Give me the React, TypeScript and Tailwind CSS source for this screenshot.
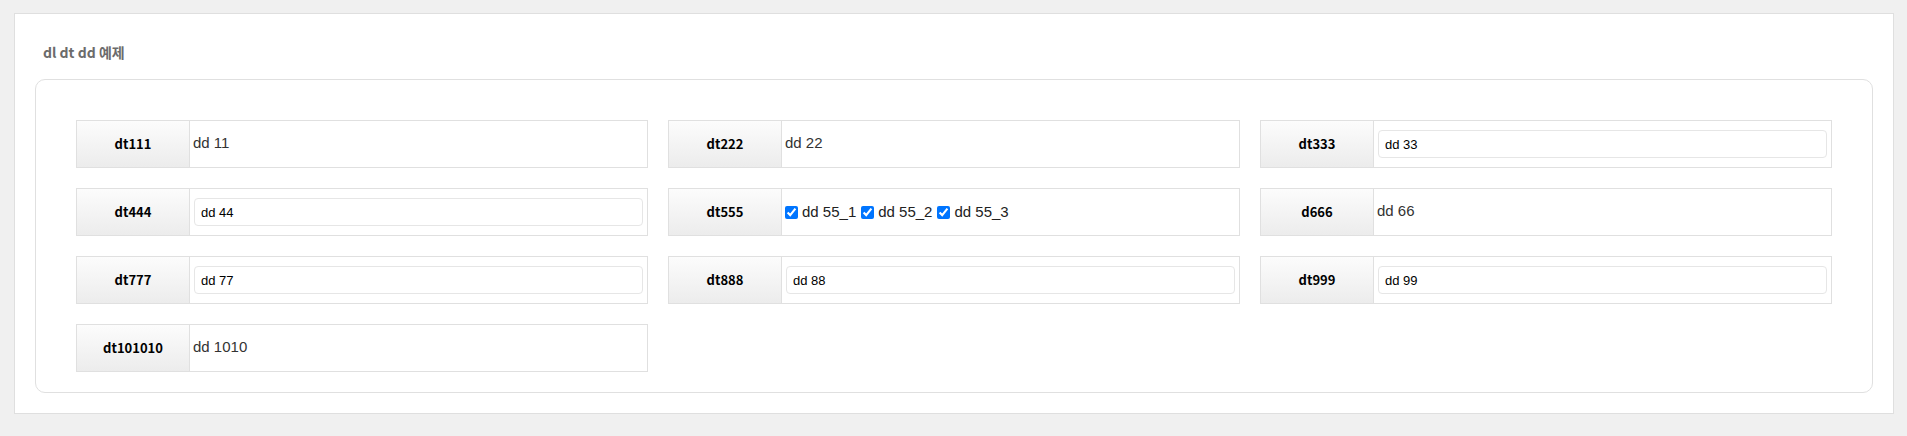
import React from "react";

type Item =
  | { dt: string; kind: "text"; value: string }
  | { dt: string; kind: "input"; value: string }
  | { dt: string; kind: "check"; values: string[] };

const items: Item[] = [
  { dt: "dt111", kind: "text", value: "dd 11" },
  { dt: "dt222", kind: "text", value: "dd 22" },
  { dt: "dt333", kind: "input", value: "dd 33" },
  { dt: "dt444", kind: "input", value: "dd 44" },
  { dt: "dt555", kind: "check", values: ["dd 55_1", "dd 55_2", "dd 55_3"] },
  { dt: "d666", kind: "text", value: "dd 66" },
  { dt: "dt777", kind: "input", value: "dd 77" },
  { dt: "dt888", kind: "input", value: "dd 88" },
  { dt: "dt999", kind: "input", value: "dd 99" },
  { dt: "dt101010", kind: "text", value: "dd 1010" },
];

function Dd({ item }: { item: Item }) {
  if (item.kind === "input") {
    return (
      <dd className="flex flex-1 items-center px-[4px]">
        <input
          type="text"
          readOnly
          defaultValue={item.value}
          className="h-[28px] w-full rounded-[4px] border border-[#e6e6e6] bg-white px-[6px] text-[13px] text-black outline-none [font-family:'Liberation_Sans',Arial,sans-serif]"
        />
      </dd>
    );
  }
  if (item.kind === "check") {
    return (
      <dd className="flex flex-1 items-center pl-[3px] text-[15px] text-[#222] [font-family:'Liberation_Sans',Arial,sans-serif]">
        {item.values.map((v) => (
          <label key={v} className="mr-[5px] flex items-center">
            <input type="checkbox" defaultChecked className="mr-[4px] h-[13px] w-[13px]" />
            <span>{v}</span>
          </label>
        ))}
      </dd>
    );
  }
  return (
    <dd className="flex flex-1 items-center pl-[3px] pb-[1px] text-[15px] text-[#333] [font-family:'Liberation_Sans',Arial,sans-serif]">
      {item.value}
    </dd>
  );
}

export default function App() {
  return (
    <div className="min-h-[436px] w-full bg-[#f0f0f0] py-[13px] pl-[14px] pr-[13px]">
      <div className="border border-[#dfdfdf] bg-white px-[20px] pb-[20px] pt-[20px]">
        <div className="flex h-[37px] items-center pl-[8px] text-[14px] font-semibold text-[#6b6b6b] [font-family:'Noto_Sans_CJK_KR','Noto_Sans',sans-serif]">
          dl dt dd 예제
        </div>
        <div className="mt-[8px] rounded-[10px] border border-[#e0e0e0] px-[40px] pb-[20px] pt-[40px]">
          <dl className="grid grid-cols-3 gap-x-[20px] gap-y-[20px]">
            {items.map((item) => (
              <div key={item.dt} className="flex h-[48px] border border-[#e0e0e0]">
                <dt className="flex w-[113px] shrink-0 items-center justify-center border-r border-[#e0e0e0] bg-linear-to-b from-[#fcfcfc] to-[#ececec] text-[13px] font-bold text-black [font-family:'Noto_Sans_CJK_KR','Noto_Sans',sans-serif]">
                  {item.dt}
                </dt>
                <Dd item={item} />
              </div>
            ))}
          </dl>
        </div>
      </div>
    </div>
  );
}
